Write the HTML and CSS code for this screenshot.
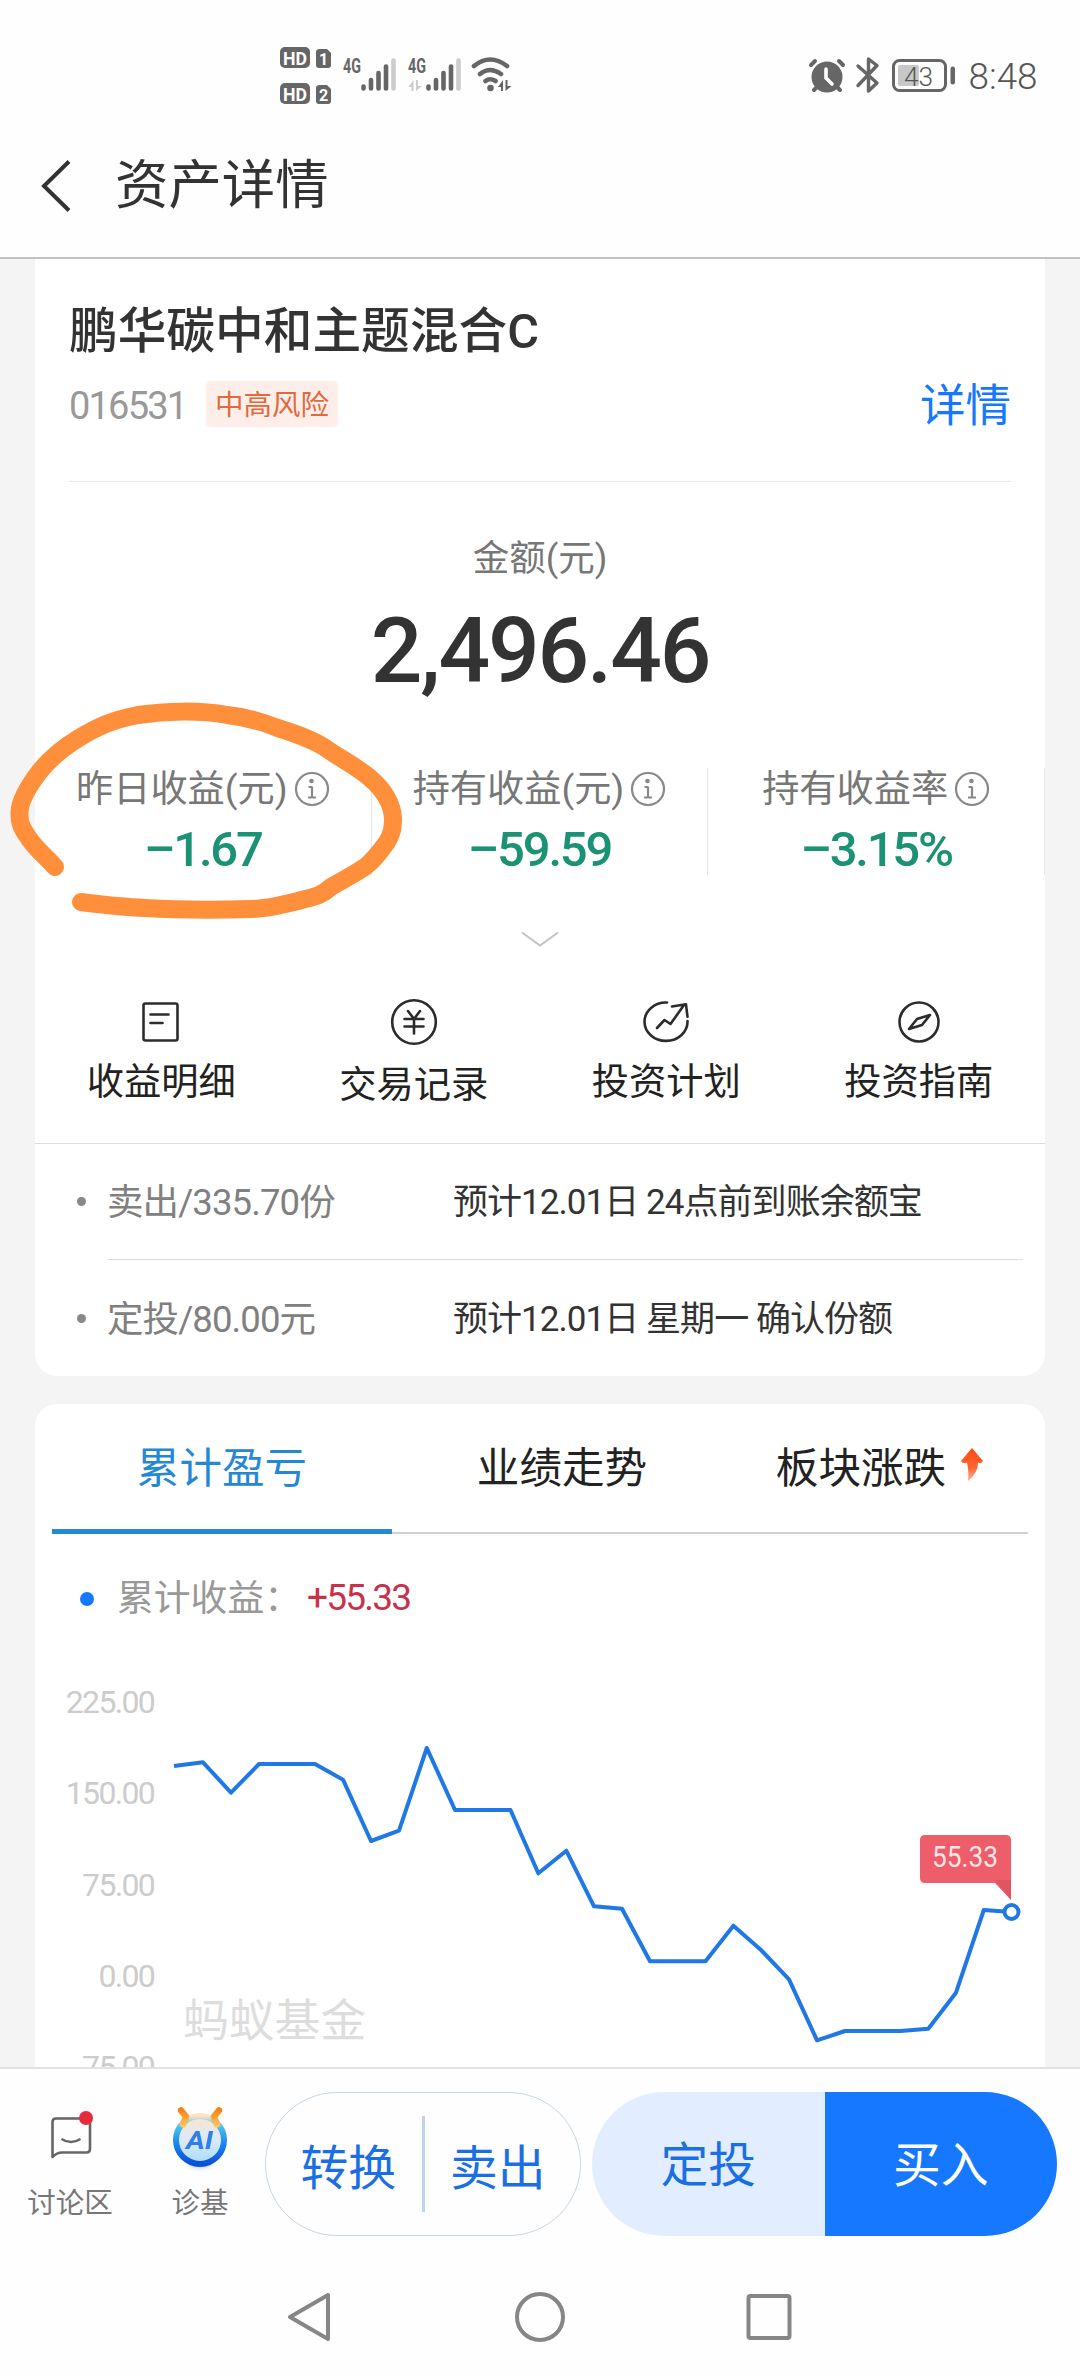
FILE: index.html
```html
<!DOCTYPE html>
<html lang="zh-CN">
<head>
<meta charset="utf-8">
<title>资产详情</title>
<link rel="stylesheet" href="styles.css">
</head>
<body>
<div class="screen">
  <header class="top">
    <div class="status">
      <svg class="status-left" width="240" height="70" viewBox="275 40 240 70">
        <g fill="#666">
          <rect x="280" y="47" width="30" height="21" rx="5"/><path d="M320 49h7l4 4v12q0 3-3 3h-9q-3 0-3-3V52q0-3 4-3z"/>
          <rect x="280" y="83" width="30" height="21" rx="5"/><path d="M320 85h7l4 4v12q0 3-3 3h-9q-3 0-3-3V88q0-3 4-3z"/>
        </g>
        <g class="hd">
          <text x="283" y="64.500" textLength="24" lengthAdjust="spacingAndGlyphs">HD</text><text x="319" y="65" textLength="8">1</text>
          <text x="283" y="100.500" textLength="24" lengthAdjust="spacingAndGlyphs">HD</text><text x="319" y="101" textLength="8">2</text>
        </g>
        <g class="net"><text x="343" y="73" textLength="18" lengthAdjust="spacingAndGlyphs">4G</text><text x="408" y="73" textLength="18" lengthAdjust="spacingAndGlyphs">4G</text></g>
        <g stroke="#666" stroke-width="4.600" stroke-linecap="round" fill="none">
          <path d="M363.500 86.500v2M371 80v8.500M378.500 73v15.500M386 66.500v22"/>
          <path d="M428.500 86.500v2M436 80v8.500M443.500 73v15.500M451 66.500v22"/>
          <path d="M393.500 60.500v28M458.500 60.500v28" stroke="#ccc"/>
          <path d="M474 66Q490 53 507 66M480 74Q490 66 501 74M485.500 81Q490 77.500 495.500 81"/>
        </g>
        <circle cx="490.500" cy="88" r="3.300" fill="#666"/>
        <path d="M408.500 87l5-7v11h-2v-4zM416 80v11l6-5h-4v-6z" fill="#ccc"/>
        <path d="M498 87l5-7v11h-2v-4zM505.500 80v11l6-5h-4v-6z" fill="#666"/>
      </svg>
      <svg class="status-right" width="240" height="50" viewBox="805 52 240 50">
        <circle cx="827" cy="77" r="15.500" fill="#666"/>
        <path d="M826 69v9l6 6" stroke="#fff" stroke-width="3.600" fill="none" stroke-linecap="round"/>
        <path d="M811 65l4-4M843 65l-4-4M814 90l4-4M840 90l-4-4" stroke="#666" stroke-width="4" stroke-linecap="round"/>
        <path d="M858 66l19 17-8.500 8V59l8.500 6.500-19 20" fill="none" stroke="#666" stroke-width="3.400" stroke-linecap="round" stroke-linejoin="round"/>
        <rect x="893.500" y="60.500" width="52" height="30" rx="6" fill="none" stroke="#666" stroke-width="3"/>
        <rect x="898" y="65" width="21" height="21" rx="2" fill="#c8c8c8"/>
        <rect x="950.500" y="66.500" width="4.500" height="18" rx="2.200" fill="#666"/>
        <text class="battery" x="904" y="85.500" textLength="29" lengthAdjust="spacingAndGlyphs">43</text>
        <text class="clock" x="968.500" y="89" textLength="69" lengthAdjust="spacingAndGlyphs">8:48</text>
      </svg>
    </div>
    <div class="titlebar">
      <svg width="36" height="56" viewBox="0 0 36 56"><path d="M31 3.500L6 28l25 24.500" fill="none" stroke="#333" stroke-width="4"/></svg>
      <h1>资产详情</h1>
    </div>
  </header>

  <main class="content">
    <section class="card asset">
      <div class="fund">
        <h2>鹏华碳中和主题混合C</h2>
        <div class="fund-meta">
          <span class="code">016531</span><span class="tag">中高风险</span><a class="detail">详情</a>
        </div>
      </div>
      <div class="amount-label">金额(元)</div>
      <div class="amount">2,496.46</div>
      <div class="stats">
        <div class="stat">
          <div class="stat-label"><span>昨日收益(元)</span><svg class="info" viewBox="0 0 36 36"><circle cx="18" cy="18" r="16"/><path d="M18 15.500v11M14.500 16h3.500M14 26.500h8"/><circle class="pt" cx="17.500" cy="10" r="2.300"/></svg></div>
          <div class="stat-value">–1.67</div>
        </div>
        <div class="stat">
          <div class="stat-label"><span>持有收益(元)</span><svg class="info" viewBox="0 0 36 36"><circle cx="18" cy="18" r="16"/><path d="M18 15.500v11M14.500 16h3.500M14 26.500h8"/><circle class="pt" cx="17.500" cy="10" r="2.300"/></svg></div>
          <div class="stat-value">–59.59</div>
        </div>
        <div class="stat">
          <div class="stat-label"><span>持有收益率</span><svg class="info" viewBox="0 0 36 36"><circle cx="18" cy="18" r="16"/><path d="M18 15.500v11M14.500 16h3.500M14 26.500h8"/><circle class="pt" cx="17.500" cy="10" r="2.300"/></svg></div>
          <div class="stat-value">–3.15%</div>
        </div>
        <svg class="marker" width="410" height="230" viewBox="0 695 410 230"><path d="M55 867C48 858 36 850 28 837C22 828 19 824 19.500 812C20 799 30 784 40 771C49 760 64 747 79 738C97 727 112 720 138 715C165 711 200 710 227 715C246 717 260 721 275 727C293 733 310 738 324 747C342 760 352 763 370 778C384 790 392 803 393 818C393 828 392 834 387 842C379 853 374 860 365 867C351 876 343 880 331 887C320 897 312 897 298 901C280 905 270 909 251 909C215 910 180 910 145 908C122 907 105 905 81 902"/></svg>
      </div>
      <div class="expand"><svg width="40" height="18" viewBox="0 0 40 18"><path d="M2 2.500L20 15.500 38 2.500" fill="none" stroke="#c4c4c4" stroke-width="2"/></svg></div>
      <nav class="actions">
        <a><svg viewBox="0 0 48 48"><rect x="6.500" y="5.500" width="34" height="37" rx="2"/><path d="M13.500 16.500h18M13.500 25h12"/></svg><span>收益明细</span></a>
        <a class="low"><svg viewBox="0 0 48 48"><circle cx="24" cy="24" r="21.800"/><path d="M18 13l6 8 6-8M14.500 21h19M14.500 28.500h19M24 21v14.500"/></svg><span>交易记录</span></a>
        <a><svg viewBox="0 0 48 48"><path d="M25 4.500A21.500 19.200 0 1 0 45.500 23M15 30l7.500-8 6 4L42 7M30 8.500l14-2.200 1.500 12.500"/></svg><span>投资计划</span></a>
        <a><svg viewBox="0 0 48 48"><circle cx="24" cy="24" r="19.500"/><path d="M35 17L22 21 14 31l13-4z"/></svg><span>投资指南</span></a>
      </nav>
      <ul class="orders">
        <li><i></i><span class="what">卖出/335.70份</span><span class="when">预计12.01日 24点前到账余额宝</span></li>
        <li><i></i><span class="what">定投/80.00元</span><span class="when">预计12.01日 星期一 确认份额</span></li>
      </ul>
    </section>

    <section class="card trend">
      <div class="tabs">
        <a class="tab active">累计盈亏</a>
        <a class="tab">业绩走势</a>
        <a class="tab">板块涨跌<svg width="24" height="36" viewBox="0 0 24 36"><defs><linearGradient id="up" x1="0" y1="0" x2="0" y2="1"><stop offset="0" stop-color="#ff4a10"/><stop offset=".6" stop-color="#ff6430"/><stop offset="1" stop-color="#ffb39a"/></linearGradient></defs><path d="M12 1L23 14q-1 3-5 1.500Q18 26 8 34q1-10-1-18.500-5 1.500-6-1.500z" fill="url(#up)"/></svg></a>
      </div>
      <div class="legend"><i></i><span>累计收益：</span><b>+55.33</b></div>
      <div class="chart">
        <div class="axis"><span>225.00</span><span>150.00</span><span>75.00</span><span>0.00</span><span>-75.00</span></div>
        <svg class="plot" width="880" height="400" viewBox="164 1668 880 400">
          <text class="watermark" x="183" y="2036.500">蚂蚁基金</text>
          <polyline points="174,1766 203,1762.300 231,1792.700 259,1764 287,1764 315,1764 343,1779.700 371,1841 399,1830.700 426.800,1748 455,1810 483,1810 510.500,1810 538.300,1873.300 566.300,1850.700 594,1906.300 622,1908.700 650,1961.300 678,1961.300 705.500,1961.300 733.400,1925.700 761,1950 789,1979.300 817,2040.300 845,2031 872.500,2031 900.500,2031 928.300,2028.700 956,1992.700 983.800,1910 1011.500,1912"/>
          <circle cx="1011.500" cy="1912" r="7"/>
          <path d="M925 1835h81q5 0 5 5v60l-16-17h-70q-5 0-5-5v-38q0-5 5-5z" fill="#ed5d6a"/>
          <path d="M995 1880h16v20z" fill="#df5563"/>
          <text class="tip" x="932" y="1867" textLength="66" lengthAdjust="spacingAndGlyphs">55.33</text>
        </svg>
      </div>
    </section>
  </main>

  <footer class="bar">
    <a class="mini"><svg width="60" height="68" viewBox="40 2102 60 68"><path d="M52.500 2157.500V2123q0-3.500 3.500-3.500h30.500q3.500 0 3.500 3.500v27q0 3.500-3.500 3.500H62q-5 0-9.500 4.500z" fill="none" stroke="#666" stroke-width="2.600" stroke-linejoin="round"/><path d="M61.500 2140q9.500 6 19 0" fill="none" stroke="#666" stroke-width="2.400"/><circle cx="86" cy="2119" r="7" fill="#e62b3c"/></svg><span>讨论区</span></a>
    <a class="mini"><svg width="64" height="72" viewBox="168 2102 64 72"><defs><linearGradient id="ring" x1="0" y1="0" x2="0" y2="1"><stop offset="0" stop-color="#fbe3c4"/><stop offset=".22" stop-color="#4cc0ee"/><stop offset=".6" stop-color="#1684ef"/><stop offset="1" stop-color="#0b4fd6"/></linearGradient><linearGradient id="orb" x1="0" y1="0" x2="0" y2="1"><stop offset="0" stop-color="#f7e6d2"/><stop offset=".5" stop-color="#dceaf6"/><stop offset="1" stop-color="#a5dcfb"/></linearGradient><linearGradient id="horn" gradientUnits="userSpaceOnUse" x1="0" y1="2108" x2="0" y2="2128"><stop offset="0" stop-color="#f57a00"/><stop offset="1" stop-color="#ffc86a"/></linearGradient><radialGradient id="glow"><stop offset="0" stop-color="#8fb8ff"/><stop offset="1" stop-color="#fff" stop-opacity="0"/></radialGradient></defs><ellipse cx="200" cy="2165" rx="20" ry="9" fill="url(#glow)"/><circle cx="200" cy="2141" r="24" fill="url(#orb)" stroke="url(#ring)" stroke-width="6"/><path d="M181 2111.500l5 6-3 8M219 2111.500l-5 6 3 8" fill="none" stroke="url(#horn)" stroke-width="6.500" stroke-linecap="round" stroke-linejoin="round"/><text class="ai" x="186" y="2150" textLength="27" lengthAdjust="spacingAndGlyphs">AI</text></svg><span>诊基</span></a>
    <div class="pill outline"><a>转换</a><i></i><a>卖出</a></div>
    <div class="pill solid"><a class="plan">定投</a><a class="buy">买入</a></div>
  </footer>
  <div class="sysnav">
    <svg width="1080" height="60" viewBox="0 2287 1080 60"><g fill="none" stroke="#868686" stroke-width="4" stroke-linejoin="round"><path d="M328 2295v44l-38-22z"/><circle cx="540" cy="2317" r="23"/><rect x="748.500" y="2296" width="41" height="42" rx="2"/></g></svg>
  </div>
</div>
</body>
</html>
```
FILE: styles.css
```css
* { box-sizing: border-box; margin: 0; padding: 0; }
body { font-family: Roboto, "Noto Sans CJK SC", sans-serif; color: #333; background: #fff; }
i { font-style: normal; }
svg { display: block; flex: none; }
.screen { width: 1080px; height: 2376px; display: flex; flex-direction: column; overflow: hidden; }

/* header */
.top { height: 259px; border-bottom: 2px solid #c2c2c2; background: #fefefe; }
.status { height: 130px; display: flex; justify-content: space-between; padding: 40px 35px 0 275px; }
.status-right { margin-top: 12px; }
.hd text { font-size: 18px; font-weight: 700; fill: #fff; }
.hd text:nth-child(even) { font-size: 16px; }
.net text { font-size: 21px; font-weight: 700; fill: #666; }
.battery { font-size: 26px; font-weight: 300; fill: #555; }
.clock { font-size: 36.500px; font-weight: 300; fill: #555; }
.titlebar { height: 110px; display: flex; align-items: center; padding: 2px 0 0 38px; gap: 41px; }
.titlebar h1 { font-size: 53.400px; font-weight: 400; line-height: 64px; }

/* cards */
.content { height: 1808px; background: #f4f4f4; padding: 0 35px; display: flex; flex-direction: column; gap: 28px; overflow: hidden; }
.card { background: #fff; flex: none; }
.asset { height: 1117px; border-radius: 0 0 22px 22px; }
.fund { margin: 0 34px; height: 223px; border-bottom: 1px solid #e8e8e8; padding-top: 41px; }
.fund h2 { font-size: 48.700px; font-weight: 500; line-height: 64px; }
.fund-meta { display: flex; align-items: center; height: 46px; margin-top: 17px; }
.code { font-size: 38px; color: #999; letter-spacing: -1.800px; width: 137px; padding-top: 3px; }
.tag { width: 132px; height: 46px; line-height: 49px; border-radius: 5px; background: #fdeee9; color: #e06a3c; font-size: 28.500px; text-align: center; }
.detail { margin-left: auto; font-size: 45.500px; line-height: 46px; padding-top: 5px; color: #1677ff; }
.amount-label { margin-top: 56px; height: 42px; line-height: 42px; font-size: 36.500px; color: #777; text-align: center; }
.amount { margin-top: 21px; height: 100px; line-height: 100px; font-size: 91px; font-weight: 500; letter-spacing: -2.200px; text-align: center; }
.stats { position: relative; display: grid; grid-template-columns: repeat(3, 1fr); height: 104px; margin-top: 67px; }
.stat { border-right: 1px solid #e6e6e6; display: flex; flex-direction: column; align-items: center; }
.stat-label { display: flex; align-items: center; gap: 6px; height: 42px; line-height: 40px; font-size: 37.200px; color: #777; white-space: nowrap; }
.info { width: 36px; height: 36px; fill: none; stroke: #888; stroke-width: 2.200; }
.info .pt { fill: #888; stroke: none; }
.stat-value { height: 50px; line-height: 50px; margin-top: 15px; font-size: 49px; font-weight: 500; color: #1a9273; letter-spacing: -2.200px; }
.marker { position: absolute; left: -35px; top: -73px; }
.marker path { fill: none; stroke: #ff8f3a; stroke-width: 18; stroke-linecap: round; stroke-linejoin: round; }
.expand { display: flex; justify-content: center; margin-top: 58px; height: 18px; }
.actions { display: grid; grid-template-columns: repeat(4, 1fr); height: 196px; padding-top: 50px; border-bottom: 1px solid #dedede; }
.actions a { display: flex; flex-direction: column; align-items: center; gap: 14px; font-size: 37.300px; line-height: 44px; color: #222; }
.actions a.low { gap: 17px; }
.actions svg { width: 48px; height: 48px; fill: none; stroke: #2c2c2c; stroke-width: 2.600; stroke-linecap: round; stroke-linejoin: round; }
.orders { list-style: none; }
.orders li { display: flex; align-items: center; height: 116px; margin: 0 22px 0 72px; }
.orders li:first-child { border-bottom: 1px solid #dedede; }
.orders i { width: 9px; height: 9px; border-radius: 50%; background: #888; margin-left: -30px; margin-right: 21px; }
.what { width: 346px; font-size: 36.500px; line-height: 44px; padding-top: 3px; color: #808080; letter-spacing: -.9px; }
.when { font-size: 35px; line-height: 44px; padding-top: 3px; letter-spacing: -.95px; white-space: nowrap; }

/* trend */
.trend { height: 900px; border-radius: 22px 22px 0 0; }
.tabs { display: grid; grid-template-columns: 340px 340px 296px; margin: 0 17px; height: 130px; border-bottom: 2px solid #d2d2d2; font-size: 42.600px; color: #222; }
.tab { display: flex; align-items: center; justify-content: center; gap: 14px; height: 130px; padding-bottom: 4px; border-bottom: 5px solid transparent; }
.tab.active { color: #2588d3; border-color: #2588d3; }
.legend { display: flex; align-items: center; height: 50px; margin: 40px 0 0 45px; font-size: 36.800px; line-height: 44px; color: #999; }
.legend i { width: 14px; height: 14px; border-radius: 50%; background: #1677ff; margin-right: 23px; }
.legend span { width: 190px; white-space: nowrap; padding-bottom: 1px; }
.legend b { font-weight: 400; font-size: 37px; color: #c7324a; letter-spacing: -1.800px; padding-bottom: 2px; }
.chart { display: flex; margin-top: 44px; }
.axis { width: 119px; display: flex; flex-direction: column; margin: -11px 10px 0 0; text-align: right; font-size: 32px; line-height: 91.300px; color: #ccc; letter-spacing: -1.700px; }
.plot polyline { fill: none; stroke: #1f78e6; stroke-width: 4; stroke-linejoin: round; }
.plot circle { fill: #fff; stroke: #1f78e6; stroke-width: 4; }
.watermark { font-size: 45.800px; fill: #ddd; }
.tip { font-size: 29px; fill: #fff; fill-opacity: .85; }

/* bottom bar */
.bar { height: 169px; border-top: 2px solid #e2e2e2; background: #fefefe; display: flex; padding: 23px 0 0 23px; }
.mini { display: flex; flex-direction: column; align-items: center; width: 94px; height: 140px; padding-top: 9px; font-size: 28.500px; color: #777; }
.mini + .mini { margin-left: 36px; }
.mini span { line-height: 40px; margin-top: auto; margin-bottom: 8px; }
.ai { font-size: 25px; font-weight: 700; font-style: italic; fill: #2f7fe8; }
.pill { height: 144px; border-radius: 72px; display: flex; align-items: center; font-size: 47.800px; color: #1b6fe4; overflow: hidden; }
.pill a { flex: 1; text-align: center; }
.outline { width: 316px; margin-left: 18px; border: 1px solid #c6d6e4; padding: 0 9px; }
.outline i { width: 3px; height: 96px; background: #bed4ec; }
.solid { width: 465px; margin-left: 11px; }
.solid a { height: 144px; line-height: 148px; }
.plan { background: #e2eeff; }
.buy { background: #1677ff; color: #fff; }
.sysnav { flex: 1; padding-top: 51px; background: #fefefe; }
```
